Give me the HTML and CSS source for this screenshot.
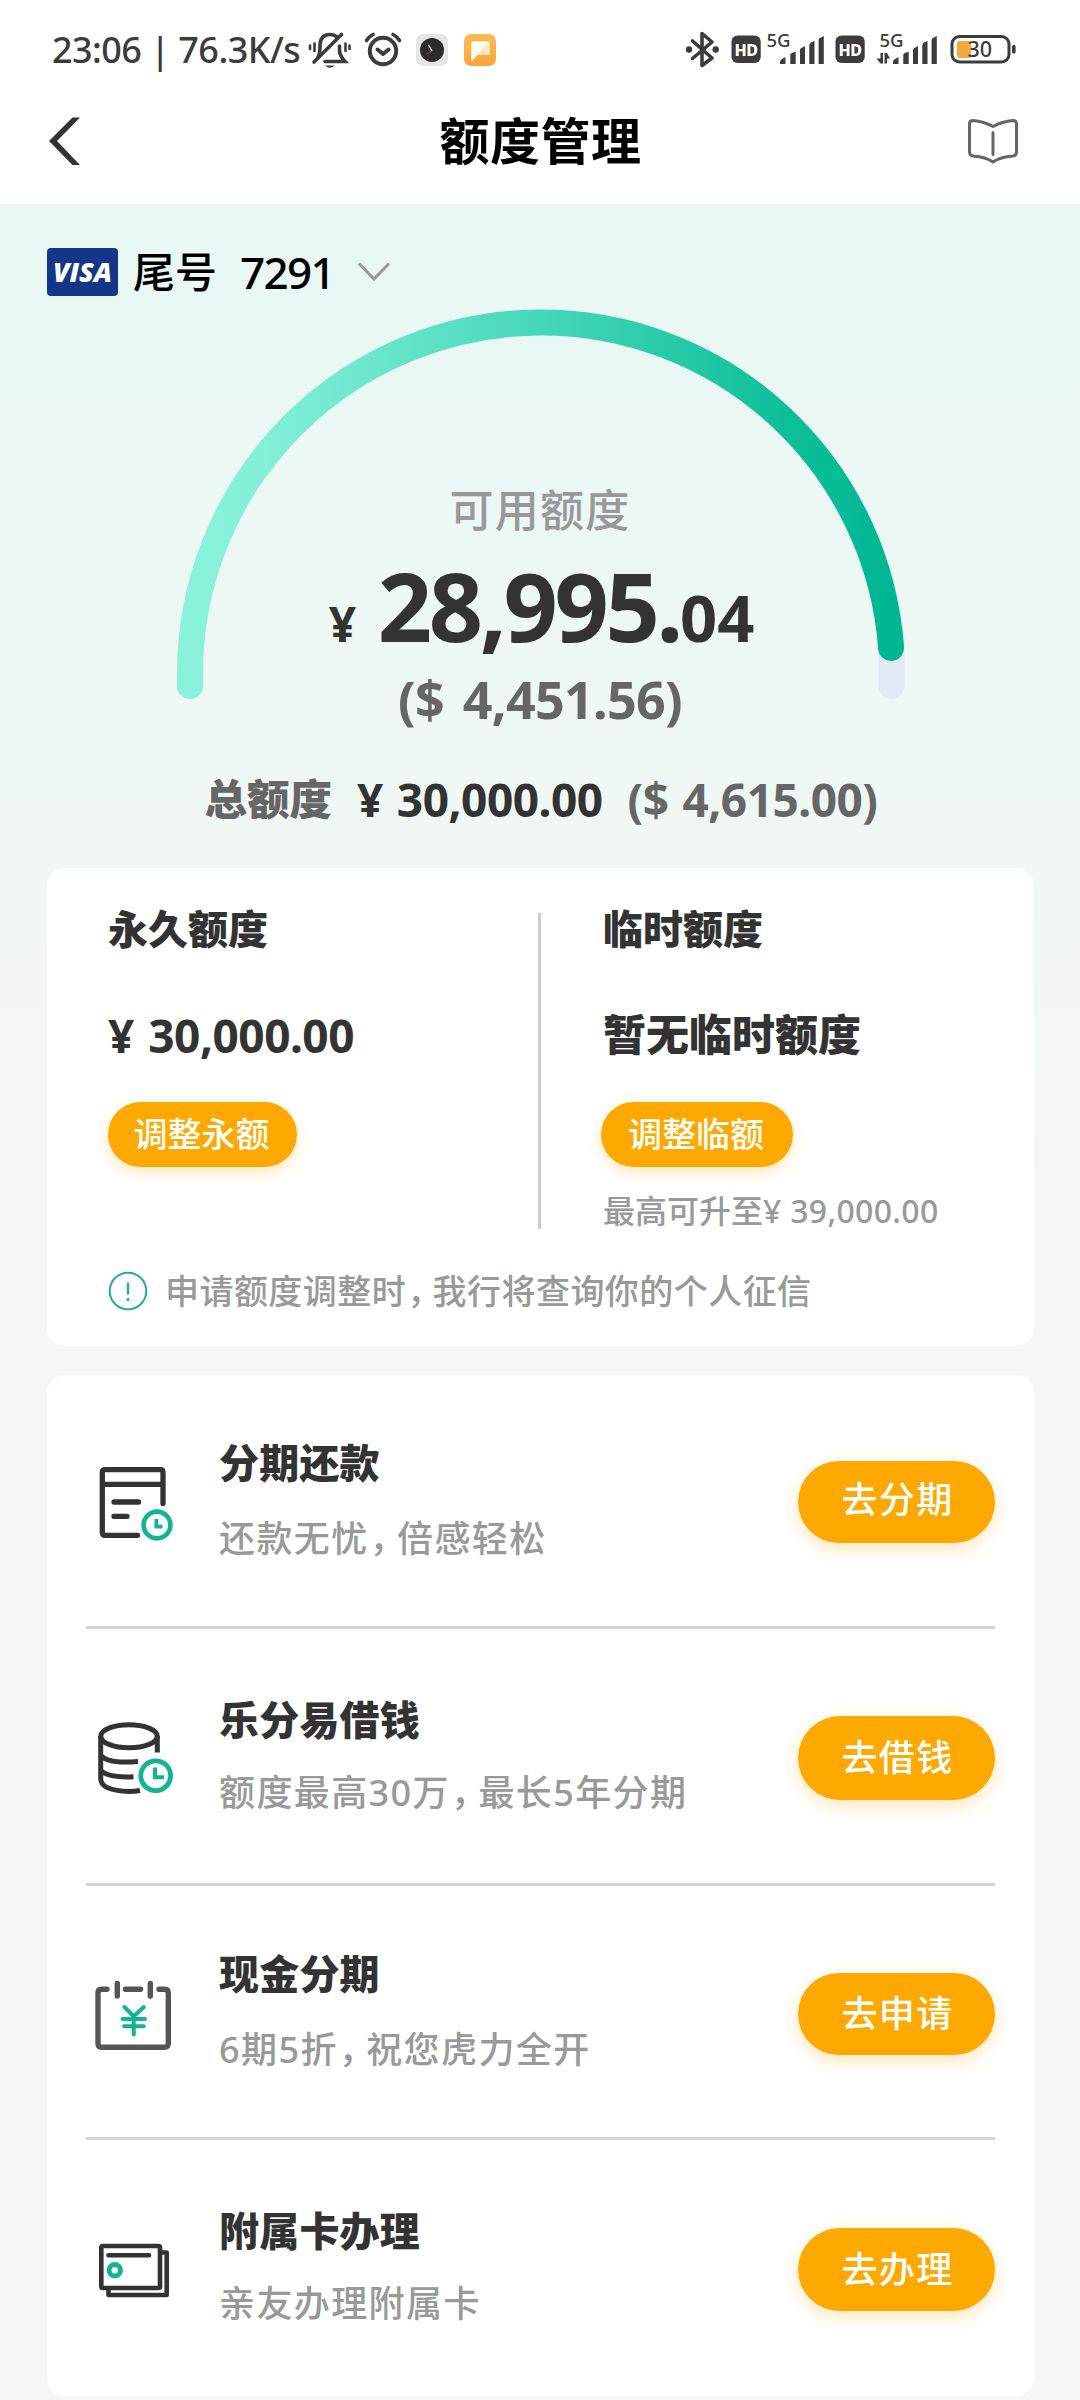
FILE: index.html
```html
<!DOCTYPE html>
<html lang="zh-CN">
<head>
<meta charset="utf-8">
<title>额度管理</title>
<link rel="stylesheet" href="styles.css">
</head>
<body>
<header class="top">
  <div class="status">
    <span class="status-text">23:06 | 76.3K/s</span>
    <svg class="ic-bell" width="44" height="40" viewBox="308 30 44 40" fill="none" stroke="#3c3c3c" stroke-width="3.6" stroke-linecap="round">
      <path d="M318 57.5Q320 54 320 48V45Q320.5 34.5 330 34.5Q334 34.5 337 37"/>
      <path d="M341.500 34.500L314 62"/>
      <path d="M339.500 46V51Q340 56 345 61.500H325"/>
      <path d="M325 65.500H334.500Q330 70 325 65.500Z" fill="#3c3c3c" stroke="none"/>
      <path d="M310 45.500V49M314.500 43.500V51M345.500 43.500V51M349.500 45.500V49" stroke-width="2.600"/>
    </svg>
    <svg class="ic-alarm" width="40" height="40" viewBox="363 30 40 40" fill="none" stroke="#3c3c3c" stroke-width="4" stroke-linecap="round" stroke-linejoin="round">
      <circle cx="383" cy="51" r="13.200"/>
      <path d="M377.500 49.500L383 54L388.500 49.500"/>
      <path d="M366.500 40.500Q369 36.500 373 34.500M393 34.500Q397 36.500 399.500 40.500" stroke-width="3.600"/>
    </svg>
    <svg class="ic-clock" width="32" height="32" viewBox="0 0 32 32">
      <rect width="32" height="32" rx="7" fill="#e6e6e8"/>
      <circle cx="16" cy="16" r="12" fill="#2b2b2d"/>
      <path d="M16 17L12.500 11" stroke="#fff" stroke-width="1.300"/>
      <path d="M16 17L10.500 20" stroke="#b04040" stroke-width="1"/>
    </svg>
    <svg class="ic-note" width="32" height="32" viewBox="0 0 32 32">
      <defs><linearGradient id="note" x1="0" y1="0" x2="0" y2="1"><stop offset="0" stop-color="#fdbb55"/><stop offset="1" stop-color="#fda53c"/></linearGradient></defs>
      <rect width="32" height="32" rx="7" fill="url(#note)"/>
      <path d="M8.500 7.500H25Q26 7.500 26 8.500V21H14L7.500 27V8.500Q7.500 7.500 8.500 7.500Z" fill="#ffe6bd"/>
      <path d="M8.500 7.500H25L7.500 27V8.500Q7.500 7.500 8.500 7.500Z" fill="#fffaf2"/>
    </svg>
    <svg class="status-right" width="340" height="44" viewBox="680 28 340 44">
      <g fill="none" stroke="#3c3c3c" stroke-width="3.600" stroke-linejoin="round" stroke-linecap="round">
        <path d="M692.500 41L712 58L702 65.500V33.500L712 42L692.500 58.500"/>
      </g>
      <g fill="#3c3c3c">
        <circle cx="689" cy="49.500" r="3.200"/><circle cx="715.700" cy="49.500" r="3.200"/>
        <rect x="731.500" y="35.500" width="29.200" height="27.500" rx="6"/>
        <rect x="835.500" y="35.500" width="29.200" height="27.500" rx="6"/>
        <path id="bars" d="M780 64V62Q780 60 782 59L785.500 57V64ZM790.300 64V55Q790.300 53.500 792 53L795.700 51.500V64ZM800 64V50Q800 48.500 801.500 48L805 46V64ZM809.300 64V45Q809.300 43.500 811 42.500L814.500 41V64ZM818.600 64V40Q818.600 38.500 820 38L823.800 36V64Z"/>
        <use href="#bars" x="113"/>
        <path d="M883 53H880.500V58.500H876.500L880.500 63.500H883ZM884.500 63.500H887V58.500H890L887 53H884.500Z"/>
        <rect x="1012" y="45" width="3.600" height="8.500" rx="1.500"/>
      </g>
      <rect x="952" y="36.500" width="57" height="25.500" rx="7.500" fill="none" stroke="#3c3c3c" stroke-width="3"/>
      <rect x="957" y="41" width="14" height="17" rx="2.500" fill="#f2a93b"/>
      <g class="hd"><text x="734.500" y="55.500">HD</text><text x="838.500" y="55.500">HD</text></g>
      <g class="net"><text x="766.500" y="47">5G</text><text x="879.500" y="47">5G</text></g>
      <text class="batt" x="967.500" y="57">30</text>
    </svg>
  </div>
  <nav class="nav">
    <svg width="34" height="50" viewBox="0 0 34 50"><path d="M24.500 1.500H32L9 25L32 49H24.500L1 25Z" fill="#333"/></svg>
    <h1>额度管理</h1>
    <svg width="52" height="48" viewBox="967 117 52 48" fill="none" stroke="#666" stroke-width="3" stroke-linejoin="round" stroke-linecap="round">
      <path d="M993 126.500Q984 121.500 973 120.500Q969.500 120.500 969.500 124V152Q969.500 155.500 973 156Q986 157 993 162Q1000 157 1013 156Q1016.500 155.500 1016.500 152V124Q1016.500 120.500 1013 120.500Q1002 121.500 993 126.500ZM993 132.500V154.500"/>
    </svg>
  </nav>
</header>

<main class="page">
  <div class="card-pick">
    <span class="visa">VISA</span>
    <span class="pick-label">尾号</span>
    <span class="pick-num">7291</span>
    <svg width="34" height="22" viewBox="0 0 34 22" fill="none" stroke="#999" stroke-width="3"><path d="M2 2.500L17 18L32 2.500"/></svg>
  </div>

  <section class="gauge">
    <svg class="arc" width="1080" height="405" viewBox="0 300 1080 405" fill="none" stroke-width="26" stroke-linecap="round">
      <defs><linearGradient id="g" gradientUnits="userSpaceOnUse" x1="190" y1="0" x2="891" y2="0">
        <stop offset="0" stop-color="#8af2db"/><stop offset=".1" stop-color="#84f0d8"/><stop offset=".5" stop-color="#45d7b9"/><stop offset=".85" stop-color="#0dbf99"/><stop offset="1" stop-color="#00b791"/>
      </linearGradient></defs>
      <path d="M891.500 640V686" stroke="#e3e9f6"/>
      <path d="M190 686V673.500A351 351 0 0 1 541 322.500A351 351 0 0 1 891.100 648" stroke="url(#g)"/>
    </svg>
    <div class="readout">
      <p class="avail">可用额度</p>
      <p class="amount"><span class="yen">¥</span><span class="whole">28,995.</span><span class="cents">04</span></p>
      <p class="usd">($ 4,451.56)</p>
      <p class="total"><span class="total-label">总额度</span><span class="total-cny">¥ 30,000.00</span><span class="total-usd">($ 4,615.00)</span></p>
    </div>
  </section>

  <section class="panel limits">
    <div class="cols">
      <div class="col">
        <h2>永久额度</h2>
        <p class="val">¥ 30,000.00</p>
        <button class="btn-sm">调整永额</button>
      </div>
      <div class="col col-temp">
        <h2>临时额度</h2>
        <p class="val val-none">暂无临时额度</p>
        <button class="btn-sm btn-temp">调整临额</button>
        <p class="max">最高可升至<span>¥ 39,000.00</span></p>
      </div>
    </div>
    <p class="notice">
      <svg width="40" height="40" viewBox="0 0 40 40" fill="none" stroke="#1db28f" stroke-width="2"><circle cx="20" cy="20" r="18.300"/><path d="M20 11.500V23.500M20 27V30" stroke-width="2.400"/></svg>
      <span>申请额度调整时<i>，</i>我行将查询你的个人征信</span>
    </p>
  </section>

  <section class="panel offers">
    <article class="offer offer-1">
      <svg class="icon" width="80" height="80" viewBox="0 0 80 80" fill="none" stroke="#333" stroke-width="5.300" stroke-linecap="round">
        <path d="M41.500 73.300H9Q6.300 73.300 6.300 70.500V10.500Q6.300 7.700 9 7.700H64.300Q67 7.700 67 10.500V41.500M6.300 22.300H67M18 40H42.500M18 54.300H31"/>
        <g stroke="#13b492" stroke-width="4.600"><circle cx="61" cy="63" r="13.400"/><path d="M60.300 57V64.600H66.500" stroke-width="3.800" stroke-linecap="butt"/></g>
      </svg>
      <div class="info"><h3>分期还款</h3><p>还款无忧<i>，</i>倍感轻松</p></div>
      <button class="btn">去分期</button>
    </article>
    <article class="offer offer-2">
      <svg class="icon" width="80" height="80" viewBox="0 0 80 80" fill="none" stroke="#333" stroke-width="5">
        <ellipse cx="33" cy="18.200" rx="28.300" ry="11.500"/>
        <path d="M61.300 18V34.500M4.700 18V61Q5 72.500 33 73.500Q39 73.500 44 72.500M4.700 37Q11 46 42 43.500M4.700 52Q11 60 37.500 58.700"/>
        <g stroke="#13b492" stroke-width="4.800"><circle cx="59.700" cy="57.700" r="14.900"/><path d="M59 49.500V59.300H68" stroke-width="4"/></g>
      </svg>
      <div class="info"><h3>乐分易借钱</h3><p>额度最高30万<i>，</i>最长5年分期</p></div>
      <button class="btn">去借钱</button>
    </article>
    <article class="offer offer-3">
      <svg class="icon" width="80" height="80" viewBox="0 0 80 80" fill="none" stroke="#555" stroke-width="5.400" stroke-linecap="round">
        <path d="M13 13.300H7.500Q4 13.300 4 17V67.500Q4 71.300 7.500 71.300H70.500Q74.300 71.300 74.300 67.500V17Q74.300 13.300 70.500 13.300H65M31.500 13.300H46.500M23.300 7.500V20M56.300 7.500V20"/>
        <path d="M30.500 31L39.700 40.500L49.800 31M39.700 40.500V58.500M28.500 43H51M30 50.300H49.800" stroke="#13b492" stroke-width="4"/>
      </svg>
      <div class="info"><h3>现金分期</h3><p>6期5折<i>，</i>祝您虎力全开</p></div>
      <button class="btn">去申请</button>
    </article>
    <article class="offer offer-4">
      <svg class="icon" width="80" height="80" viewBox="0 0 80 80" fill="none" stroke="#333" stroke-width="4.600" stroke-linecap="round" stroke-linejoin="round">
        <rect x="5.300" y="14" width="58.700" height="42" rx="1.500"/>
        <path d="M65 20.500H70.700V63H12.500V57M12.500 23.300H53"/>
        <circle cx="18.800" cy="38.300" r="5.700" stroke="#13b492" stroke-width="5"/>
      </svg>
      <div class="info"><h3>附属卡办理</h3><p>亲友办理附属卡</p></div>
      <button class="btn">去办理</button>
    </article>
  </section>
</main>
</body>
</html>
```
FILE: styles.css
```css
* { box-sizing: border-box; margin: 0; padding: 0; }
body {
  width: 1080px;
  height: 2400px;
  overflow: hidden;
  background: #f6f6f6;
  color: #333;
  font-family: "Noto Sans", "Noto Sans CJK SC", sans-serif;
}
svg { display: block; flex: none; }
/* narrow comma between clauses */
i { font-family: "Noto Sans CJK SC", sans-serif; font-style: normal; font-feature-settings: "halt"; line-height: 1; margin: 0 8px 0 1px; }
button { border: 0; font-family: inherit; color: #fff; background: #ffa800; white-space: nowrap; }

/* status bar and title */
.top { height: 204px; background: #fff; }
.status { display: flex; align-items: center; height: 100px; padding-left: 52px; }
.status-text { width: 256px; font-size: 36px; line-height: 44px; letter-spacing: -.550px; color: #3c3c3c; white-space: pre; font-weight: 500; }
.ic-alarm { margin-left: 11px; }
.ic-clock { margin-left: 13px; }
.ic-note { margin-left: 16px; }
.status-right { margin-left: 184px; }
.hd { font: 800 16px "Noto Sans", sans-serif; fill: #fff; letter-spacing: -.500px; }
.net { font: 500 18.500px "Noto Sans", sans-serif; fill: #3c3c3c; }
.batt { font: 500 21.500px "Noto Sans", sans-serif; fill: #3c3c3c; }
.nav { display: flex; align-items: center; justify-content: space-between; height: 82px; padding: 0 61px 0 48px; }
.nav h1 { font-size: 50px; line-height: 60px; color: #000; margin-left: 32px; letter-spacing: .500px; }

/* gradient area */
.page { height: 2196px; background: linear-gradient(#e8f8f4 0, #edf8f5 400px, #f6f6f6 1080px); }
.card-pick { display: flex; align-items: center; height: 92px; padding: 44px 0 0 47px; color: #000; font-weight: 500; }
.visa { width: 71px; height: 48px; border-radius: 4px; background: #143688; color: #fff; font: italic 800 27px/47px "Open Sans", sans-serif; text-align: center; }
.pick-label { margin-left: 15px; font-size: 42px; line-height: 48px; }
.pick-num { margin-left: 23px; width: 91px; font-size: 44px; line-height: 46px; letter-spacing: -1.700px; }
.card-pick svg { margin-left: 26px; }

.gauge { display: grid; height: 568px; margin-top: 4px; }
.arc, .readout { grid-area: 1 / 1; }
.readout { display: flex; flex-direction: column; align-items: center; padding-top: 188px; font-weight: 700; }
.avail { font-size: 44px; line-height: 44px; letter-spacing: 1.300px; font-weight: 500; color: #999; }
.amount { display: flex; align-items: baseline; height: 98px; margin: 26px 0 0 3px; line-height: 1; }
.yen { width: 49px; font-size: 48px; }
.whole { font-size: 95px; letter-spacing: -3.300px; }
.cents { font-size: 65px; letter-spacing: 0; }
.usd { margin-top: 16px; font-size: 52px; line-height: 54px; letter-spacing: -.700px; word-spacing: 6px; color: #666; }
.total { display: flex; align-items: center; margin: 50px 0 0 2px; font-size: 46px; line-height: 46px; letter-spacing: -.500px; word-spacing: 2.500px; white-space: pre; }
.total-label { font-size: 42.500px; font-weight: 900; letter-spacing: 0; color: #666; }
.total-cny { margin-left: 25px; }
.total-usd { margin-left: 25px; color: #666; }

/* panels */
.panel { width: 987px; margin-left: 47px; border-radius: 18px; background: #fff; }
.limits { height: 478px; padding-top: 45px; }
.cols { display: grid; grid-template-columns: 494px 1fr; height: 314px; }
.col { display: flex; flex-direction: column; align-items: flex-start; padding-left: 61px; border-right: 3px solid #ccc; }
.col-temp { padding-left: 62px; border: 0; }
.col h2 { margin-top: -5px; font-size: 40px; line-height: 42px; font-weight: 900; }
.val { margin-top: 62px; font-size: 46px; font-weight: 700; line-height: 46px; letter-spacing: -.500px; word-spacing: 3px; height: 47px; }
.val-none { font-size: 43px; font-weight: 900; letter-spacing: 0; }
.btn-sm { width: 189px; height: 65px; margin: 43px 0 0 0; padding: 0 2px 1px 0; border-radius: 33px; font-size: 34px; line-height: 64px; font-weight: 500; box-shadow: 0 5px 14px rgba(255, 168, 0, .28); }
.btn-temp { width: 192px; margin-left: -2px; }
.max { margin: 26px 0 0 0; font-size: 32px; font-weight: 500; line-height: 36px; color: #999; white-space: pre; }
.max span { letter-spacing: .300px; }
.notice { display: flex; align-items: center; height: 40px; margin: 44px 0 0 61px; font-size: 34px; font-weight: 500; letter-spacing: .450px; line-height: 40px; color: #999; }
.notice span { margin-left: 17px; }

.offers { height: 1021px; margin-top: 29px; padding: 0 39px; }
.offer { display: flex; align-items: flex-start; height: 255px; border-bottom: 3px solid #d4d4d4; }
.offer-1, .offer-3 { height: 254px; }
.offer-2 { height: 257px; }
.offer-4 { border: 0; }
.icon { margin-left: 10px; }
.info { flex: 1; margin-left: 43px; }
.info h3 { font-size: 40px; font-weight: 900; line-height: 44px; letter-spacing: .200px; white-space: nowrap; }
.info p { margin-top: 32px; font-size: 36px; font-weight: 500; line-height: 44px; letter-spacing: 1.400px; color: #999; white-space: nowrap; }
.btn { width: 197px; height: 83px; padding: 0 0 5px 2px; border-radius: 42px; font-size: 36px; letter-spacing: 1.300px; font-weight: 500; box-shadow: 0 6px 18px rgba(255, 168, 0, .28); }
.offer-1 .icon { margin-top: 87px; }
.offer-1 .info { padding-top: 66px; }
.offer-1 .btn { margin-top: 86px; height: 82px; padding-bottom: 10px; }
.offer-2 .icon { margin-top: 89px; }
.offer-2 .info { padding-top: 69px; }
.offer-2 .info p { margin-top: 29px; }
.offer-2 .btn { margin-top: 87px; height: 84px; }
.offer-3 .icon { margin: 90px 2px 0 8px; }
.offer-3 .info { padding-top: 66px; }
.offer-3 .btn { margin-top: 87px; height: 82px; }
.offer-4 .icon { margin-top: 92px; }
.offer-4 .info { padding-top: 69px; }
.offer-4 .info p { margin-top: 29px; }
.offer-4 .btn { margin-top: 88px; }
```
